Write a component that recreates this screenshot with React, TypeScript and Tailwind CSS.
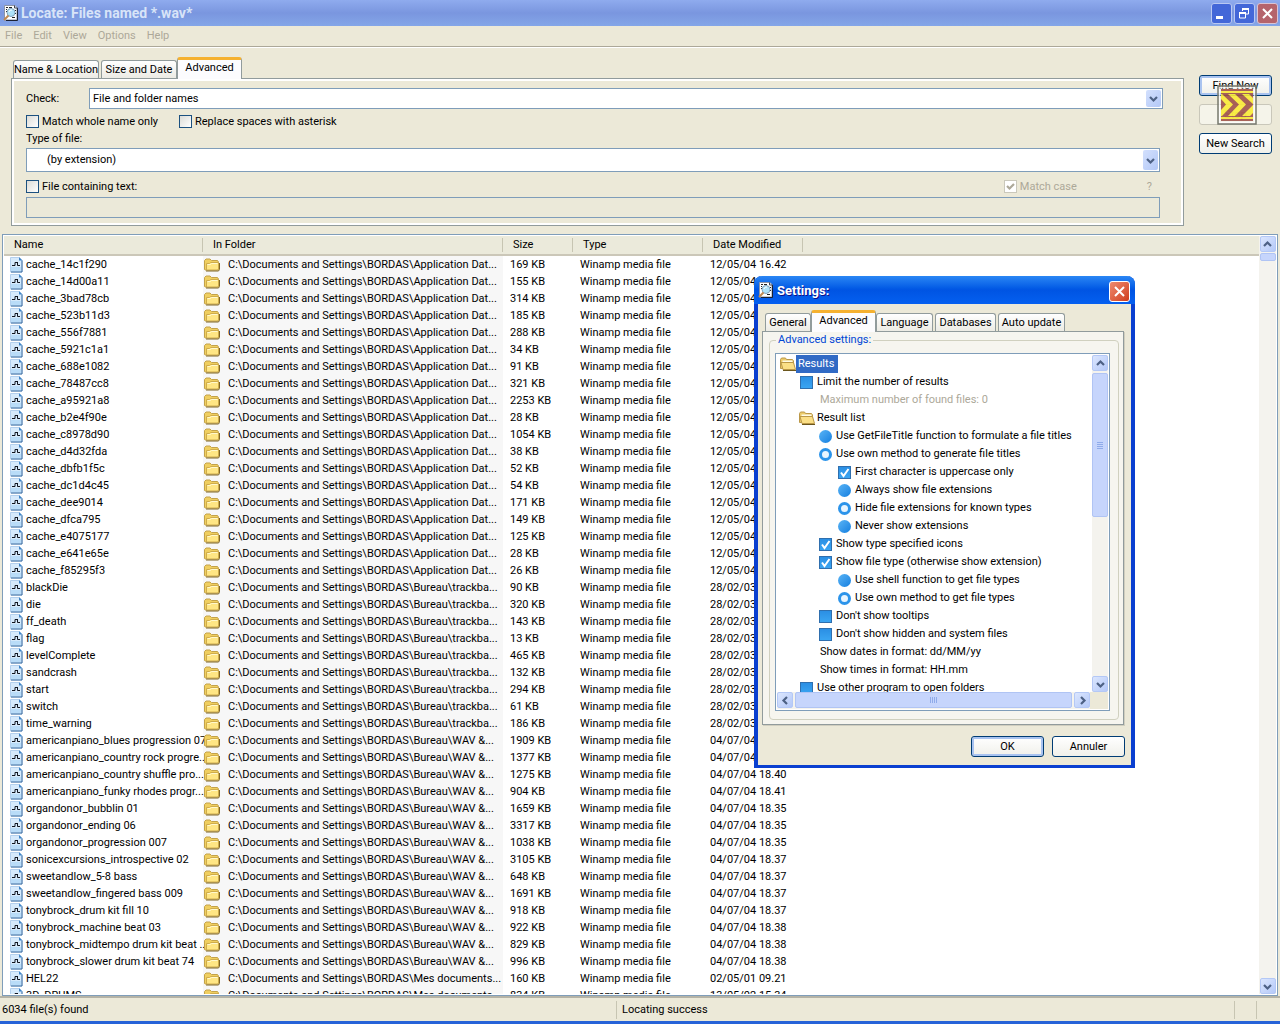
import type { ReactNode } from 'react';
import { clsx } from 'clsx';

const APP_DATA = 'C:\\Documents and Settings\\BORDAS\\Application Dat...';
const TRACKBACK = 'C:\\Documents and Settings\\BORDAS\\Bureau\\trackba...';
const WAV = 'C:\\Documents and Settings\\BORDAS\\Bureau\\WAV &...';
const MES_DOCS = 'C:\\Documents and Settings\\BORDAS\\Mes documents...';

const files = [
  ['cache_14c1f290', APP_DATA, '169 KB', '12/05/04 16.42'],
  ['cache_14d00a11', APP_DATA, '155 KB', '12/05/04 16.42'],
  ['cache_3bad78cb', APP_DATA, '314 KB', '12/05/04 16.42'],
  ['cache_523b11d3', APP_DATA, '185 KB', '12/05/04 16.42'],
  ['cache_556f7881', APP_DATA, '288 KB', '12/05/04 16.42'],
  ['cache_5921c1a1', APP_DATA, '34 KB', '12/05/04 16.42'],
  ['cache_688e1082', APP_DATA, '91 KB', '12/05/04 16.42'],
  ['cache_78487cc8', APP_DATA, '321 KB', '12/05/04 16.42'],
  ['cache_a95921a8', APP_DATA, '2253 KB', '12/05/04 16.42'],
  ['cache_b2e4f90e', APP_DATA, '28 KB', '12/05/04 16.42'],
  ['cache_c8978d90', APP_DATA, '1054 KB', '12/05/04 16.42'],
  ['cache_d4d32fda', APP_DATA, '38 KB', '12/05/04 16.42'],
  ['cache_dbfb1f5c', APP_DATA, '52 KB', '12/05/04 16.42'],
  ['cache_dc1d4c45', APP_DATA, '54 KB', '12/05/04 16.42'],
  ['cache_dee9014', APP_DATA, '171 KB', '12/05/04 16.42'],
  ['cache_dfca795', APP_DATA, '149 KB', '12/05/04 16.42'],
  ['cache_e4075177', APP_DATA, '125 KB', '12/05/04 16.42'],
  ['cache_e641e65e', APP_DATA, '28 KB', '12/05/04 16.42'],
  ['cache_f85295f3', APP_DATA, '26 KB', '12/05/04 16.42'],
  ['blackDie', TRACKBACK, '90 KB', '28/02/03 10.15'],
  ['die', TRACKBACK, '320 KB', '28/02/03 10.15'],
  ['ff_death', TRACKBACK, '143 KB', '28/02/03 10.15'],
  ['flag', TRACKBACK, '13 KB', '28/02/03 10.15'],
  ['levelComplete', TRACKBACK, '465 KB', '28/02/03 10.15'],
  ['sandcrash', TRACKBACK, '132 KB', '28/02/03 10.15'],
  ['start', TRACKBACK, '294 KB', '28/02/03 10.15'],
  ['switch', TRACKBACK, '61 KB', '28/02/03 10.15'],
  ['time_warning', TRACKBACK, '186 KB', '28/02/03 10.15'],
  ['americanpiano_blues progression 07', WAV, '1909 KB', '04/07/04 18.40'],
  ['americanpiano_country rock progre...', WAV, '1377 KB', '04/07/04 18.40'],
  ['americanpiano_country shuffle pro...', WAV, '1275 KB', '04/07/04 18.40'],
  ['americanpiano_funky rhodes progr...', WAV, '904 KB', '04/07/04 18.41'],
  ['organdonor_bubblin 01', WAV, '1659 KB', '04/07/04 18.35'],
  ['organdonor_ending 06', WAV, '3317 KB', '04/07/04 18.35'],
  ['organdonor_progression 007', WAV, '1038 KB', '04/07/04 18.35'],
  ['sonicexcursions_introspective 02', WAV, '3105 KB', '04/07/04 18.37'],
  ['sweetandlow_5-8 bass', WAV, '648 KB', '04/07/04 18.37'],
  ['sweetandlow_fingered bass 009', WAV, '1691 KB', '04/07/04 18.37'],
  ['tonybrock_drum kit fill 10', WAV, '918 KB', '04/07/04 18.37'],
  ['tonybrock_machine beat 03', WAV, '922 KB', '04/07/04 18.38'],
  ['tonybrock_midtempo drum kit beat ...', WAV, '829 KB', '04/07/04 18.38'],
  ['tonybrock_slower drum kit beat 74', WAV, '996 KB', '04/07/04 18.38'],
  ['HEL22', MES_DOCS, '160 KB', '02/05/01 09.21'],
  ['3D_DRUMS', MES_DOCS, '834 KB', '13/05/02 15.34'],
];

type TreeItem = {
  label: string;
  kind: 'folder' | 'check' | 'radio' | 'text';
  level: 0 | 1 | 2 | 3;
  on?: boolean;
  group?: string;
  disabled?: boolean;
};

const treeItems: TreeItem[] = [
  { label: 'Results', kind: 'folder', level: 0, on: true },
  { label: 'Limit the number of results', kind: 'check', level: 1 },
  { label: 'Maximum number of found files: 0', kind: 'text', level: 1, disabled: true },
  { label: 'Result list', kind: 'folder', level: 1 },
  { label: 'Use GetFileTitle function to formulate a file titles', kind: 'radio', level: 2, group: 'titles' },
  { label: 'Use own method to generate file titles', kind: 'radio', level: 2, group: 'titles', on: true },
  { label: 'First character is uppercase only', kind: 'check', level: 3, on: true },
  { label: 'Always show file extensions', kind: 'radio', level: 3, group: 'extensions' },
  { label: 'Hide file extensions for known types', kind: 'radio', level: 3, group: 'extensions', on: true },
  { label: 'Never show extensions', kind: 'radio', level: 3, group: 'extensions' },
  { label: 'Show type specified icons', kind: 'check', level: 2, on: true },
  { label: 'Show file type (otherwise show extension)', kind: 'check', level: 2, on: true },
  { label: 'Use shell function to get file types', kind: 'radio', level: 3, group: 'types' },
  { label: 'Use own method to get file types', kind: 'radio', level: 3, group: 'types', on: true },
  { label: "Don't show tooltips", kind: 'check', level: 2 },
  { label: "Don't show hidden and system files", kind: 'check', level: 2 },
  { label: 'Show dates in format: dd/MM/yy', kind: 'text', level: 1 },
  { label: 'Show times in format: HH.mm', kind: 'text', level: 1 },
  { label: 'Use other program to open folders', kind: 'check', level: 1 },
];

const treeIndent = ['pl-[3px]', 'pl-[22px]', 'pl-[41px]', 'pl-[60px]'];

function AppIcon() {
  return (
    <svg width="16" height="16" viewBox="0 0 16 16" className="shrink-0">
      <path d="M1.500 .5h10.500l2 2v12.500H1.500z" fill="#fff" stroke="#8d95a8" />
      <path d="M14.500 3v12.500H3" fill="none" stroke="#1b2233" />
      <path d="M11.500 .5V3h3" fill="none" stroke="#3b4254" />
      <path d="M3 2.500h2M6 2.500h3M3 4.500h1M3 6.500h1M12 5.500h1M12 8.500h1M9 12.500h3" stroke="#222" />
      <circle cx="8" cy="7.500" r="4" fill="#aee2f8" stroke="#7fa3bd" />
      <path d="M6 7a2.500 2.500 0 0 1 3-2" fill="none" stroke="#fff" />
      <path d="M5.500 10.500L1 15" stroke="#c08a52" strokeWidth="2" />
    </svg>
  );
}

function WaveFileIcon() {
  return (
    <svg width="13" height="16" viewBox="0 0 13 16" className="shrink-0">
      <path d="M.5 .5h8.500l3 3v11.500H.5z" fill="#d6eafc" stroke="#b4d0ee" />
      <path d="M1 10h10v4.500H1z" fill="#b9dcf8" />
      <path d="M12 3.500V15H1" fill="none" stroke="#3c6c9f" />
      <path d="M9 0l3.500 3.500H9z" fill="#3f83c6" />
      <path d="M2 8.500h3v-3M5 5.500h3M7.500 6v2.500h2.500" fill="none" stroke="#10151f" />
    </svg>
  );
}

function FolderIcon() {
  return (
    <svg width="16" height="14" viewBox="0 0 16 14" className="shrink-0">
      <path d="M.5 11.500V2.500L2 1h4l1.500 1.500h6L14.500 4v8H1z" fill="#f0cf60" stroke="#c3a24a" />
      <path d="M2.500 5.500h3l1-1h8v6.500l-1 1H2.500z" fill="#ffe684" stroke="#cfac4c" />
      <path d="M3.500 6.500h3l1-1h6" fill="none" stroke="#fff8cf" />
      <path d="M2 13h12.500l1-1.500V5" fill="none" stroke="#806829" />
    </svg>
  );
}

function OpenFolderIcon() {
  return (
    <svg width="16" height="14" viewBox="0 0 16 14" className="shrink-0">
      <path d="M.5 11.500V2.500L1.500 1h4l1 1.500h6l1 1.500v8z" fill="#eccb6a" stroke="#bb9848" />
      <path d="M2.500 3.500h10v3h-10z" fill="#fffbe6" />
      <path d="M1 5.500h12.500l2 7H3z" fill="#fbdf86" stroke="#bb9848" />
      <path d="M3 13.500h13" stroke="#6b561d" />
    </svg>
  );
}

type Direction = 'up' | 'down' | 'left' | 'right';

const chevrons = {
  up: 'M1 6l3.500-3.500L8 6',
  down: 'M1 3l3.500 3.500L8 3',
  left: 'M6 1L2.500 4.500 6 8',
  right: 'M3 1l3.500 3.500L3 8',
};

function Chevron({ direction }: { direction: Direction }) {
  return (
    <svg width="9" height="9" viewBox="0 0 9 9">
      <path d={chevrons[direction]} fill="none" stroke="#4d6185" strokeWidth="2.200" />
    </svg>
  );
}

function ScrollButton({ direction }: { direction: Direction }) {
  return (
    <button
      type="button"
      aria-label={`Scroll ${direction}`}
      className="flex h-4 w-4 shrink-0 items-center justify-center rounded-xs border border-[#b4c8f6] bg-linear-to-br from-[#dbe6fe] to-[#b5c9f8]"
    >
      <Chevron direction={direction} />
    </button>
  );
}

function Tab({ label, active, className }: { label: string; active?: boolean; className: string }) {
  return (
    <button
      type="button"
      role="tab"
      aria-selected={!!active}
      className={clsx(
        'shrink-0 whitespace-nowrap rounded-t-[3px] border border-b-0 border-[#919b9c] text-center',
        active
          ? 'z-10 -mb-px h-[22px] border-t-[3px] border-t-[#f5b130] bg-[#fcfcfe] pb-[4px]'
          : 'h-[18px] bg-linear-to-b from-white to-[#ecebe4]',
        className,
      )}
    >
      {label}
    </button>
  );
}

function PushButton({ children, primary, disabled }: { children: ReactNode; primary?: boolean; disabled?: boolean }) {
  return (
    <button
      type="button"
      disabled={disabled}
      className={clsx(
        'h-[21px] w-[73px] rounded-[3px] border text-center',
        disabled
          ? 'border-[#c9c7ba] bg-[#f5f4ea] text-[#a1a192]'
          : 'border-[#003c74] bg-linear-to-b from-white to-[#f0f0ea]',
        primary && 'shadow-[inset_0_0_0_2px_#a9c3f0]',
      )}
    >
      {children}
    </button>
  );
}

function CheckField({ label, checked, disabled }: { label: string; checked?: boolean; disabled?: boolean }) {
  return (
    <label className={clsx('flex items-center gap-[3px] leading-[13px]', disabled && 'text-[#aca899]')}>
      <span className="relative flex h-[13px] w-[13px]">
        <input
          type="checkbox"
          defaultChecked={checked}
          disabled={disabled}
          className={clsx(
            'peer h-[13px] w-[13px] appearance-none border',
            disabled ? 'border-[#cac8bb] bg-white' : 'border-[#1c5180] bg-linear-to-br from-[#dcdcd7] to-white',
          )}
        />
        <svg viewBox="0 0 13 13" className="pointer-events-none absolute inset-0 hidden peer-checked:block">
          <path d="M3 6l2.500 2.500L10 4" fill="none" stroke="#aca899" strokeWidth="2.200" />
        </svg>
      </span>
      {label}
    </label>
  );
}

function DropDown({ label, value, className }: { label: string; value: string; className: string }) {
  return (
    <div className="relative flex-1">
      <select
        aria-label={label}
        className={clsx('block w-full appearance-none border border-[#7f9db9] bg-white', className)}
      >
        <option>{value}</option>
      </select>
      <span className="pointer-events-none absolute inset-y-[2px] right-[2px] flex w-[15px] items-center justify-center rounded-xs bg-linear-to-br from-[#d3e0fd] to-[#b3c8f7]">
        <Chevron direction="down" />
      </span>
    </div>
  );
}

function TitleBar() {
  return (
    <header className="flex h-[26px] shrink-0 items-center bg-linear-to-b from-[#8fabee] via-[#7a96df] to-[#84a6e8] pl-[3px] pr-[2px]">
      <AppIcon />
      <h1 className="ml-[2px] flex-1 text-[14px] font-bold text-[#d8e4f8]">
        Locate: Files named *.wav*
      </h1>
      <div className="flex gap-[2px]">
        <button type="button" aria-label="Minimize" className="h-[21px] w-[21px] rounded-[3px] border border-[#b9c8f2] bg-[#4367d8]">
          <svg viewBox="0 0 19 19">
            <path d="M4 13.500h7" stroke="#fff" strokeWidth="3" />
          </svg>
        </button>
        <button type="button" aria-label="Restore" className="h-[21px] w-[21px] rounded-[3px] border border-[#b9c8f2] bg-[#4367d8]">
          <svg viewBox="0 0 19 19">
            <path d="M7.500 7V4.500h6v5.500H11" fill="none" stroke="#fff" />
            <path d="M7 5h7" stroke="#fff" strokeWidth="2" />
            <path d="M4.500 8.500h6v5.500h-6z" fill="none" stroke="#fff" />
            <path d="M4 9h7" stroke="#fff" strokeWidth="2" />
          </svg>
        </button>
        <button type="button" aria-label="Close" className="h-[21px] w-[21px] rounded-[3px] border border-[#d9c3d4] bg-[#b5646c]">
          <svg viewBox="0 0 19 19">
            <path d="M5 5l9 9M14 5l-9 9" stroke="#fff" strokeWidth="2" />
          </svg>
        </button>
      </div>
    </header>
  );
}

// The animation is translucent, so the buttons under it stay visible
function SearchAnimation() {
  return (
    <svg
      viewBox="0 0 40 40"
      className="pointer-events-none absolute left-[18px] top-[38px] h-10 w-10"
    >
      <rect x="1" y="1" width="38" height="38" fill="#f4f3ea" fillOpacity="0.300" stroke="#77796f" strokeWidth="1.500" />
      <rect x="2.500" y="2.500" width="35" height="35" fill="none" stroke="#fff" strokeOpacity="0.700" />
      <g opacity="0.850">
        <path d="M4 4h32v32H4z" fill="#9c4a40" />
        <path d="M4 6h32v2H4zM4 32h32v2H4z" fill="#f8e82c" />
        <path d="M4 9h1l11 10.500L5 31H4v-6l5-5.500L4 14z" fill="#fbec2c" />
        <path d="M11 9h7l11 10.500L18 31h-7l11-11.500z" fill="#fbec2c" />
        <path d="M25 9h7l4 4v6zM36 20v8l-3 3h-8z" fill="#fbec2c" />
      </g>
    </svg>
  );
}

function SearchPanel() {
  return (
    <div className="flex items-start pl-[11px] pr-2">
      <div className="flex-1 pt-[10px]">
        <div role="tablist" className="flex items-end pl-[2px]">
          <Tab label="Name & Location" className="mr-[2px] w-[86px]" />
          <Tab label="Size and Date" className="w-[76px]" />
          <Tab label="Advanced" active className="w-[65px]" />
        </div>
        <div className="border border-[#919b9c] pb-[7px] pl-[14px] pr-[20px] pt-[9px] shadow-[inset_0_0_0_2px_#fff]">
          <div className="flex items-center">
            <span className="w-[63px]">Check:</span>
            <DropDown label="Check" value="File and folder names" className="h-[21px] pl-[3px]" />
          </div>
          <div className="mt-[6px] flex">
            <div className="w-[153px]">
              <CheckField label="Match whole name only" />
            </div>
            <CheckField label="Replace spaces with asterisk" />
          </div>
          <div className="mr-[3px]">
            <div className="mt-1 leading-[14px]">Type of file:</div>
            <div className="mt-[2px] flex">
              <DropDown label="Type of file" value="(by extension)" className="h-6 pl-5" />
            </div>
            <div className="mt-2 flex items-center">
              <CheckField label="File containing text:" />
              <div className="ml-auto mr-[70px]">
                <CheckField label="Match case" checked disabled />
              </div>
              <span className="mr-2 leading-[13px] text-[#aca899]">?</span>
            </div>
            <input
              aria-label="File containing text"
              disabled
              className="mt-1 block h-[21px] w-full border border-[#7f9db9] bg-[#ebe9d9]"
            />
          </div>
        </div>
      </div>
      <div className="relative ml-[15px] flex flex-col gap-2 pt-7">
        <PushButton primary>Find Now</PushButton>
        <PushButton disabled>Stop</PushButton>
        <PushButton>New Search</PushButton>
        <SearchAnimation />
      </div>
    </div>
  );
}

function FileTable() {
  return (
    <table className="w-full table-fixed border-collapse">
      <colgroup>
        <col className="w-[199px]" />
        <col className="w-[300px]" />
        <col className="w-[70px]" />
        <col className="w-[130px]" />
        <col className="w-[100px]" />
        <col />
      </colgroup>
      <thead>
        <tr className="h-[20px] bg-[#ebeadb] shadow-[inset_0_-2px_0_#cbc7b8]">
          {['Name', 'In Folder', 'Size', 'Type', 'Date Modified'].map((title) => (
            <th key={title} className="p-0 pt-[2px] text-left align-top font-normal">
              <span className="block h-[14px] border-r border-[#c7c5b2] pl-[10px] leading-[14px]">{title}</span>
            </th>
          ))}
          <th className="p-0" />
        </tr>
      </thead>
      <tbody>
        {files.map(([name, folder, size, date]) => (
          <tr key={name} className="h-[17px] whitespace-nowrap leading-[17px]">
            <td className="p-0">
              <div className="flex items-center gap-[3px] pl-[6px]">
                <WaveFileIcon />
                {name}
              </div>
            </td>
            <td className="bg-[#f7f7f7] p-0">
              <div className="flex items-center gap-2 pl-[1px]">
                <FolderIcon />
                {folder}
              </div>
            </td>
            <td className="p-0 pl-[7px]">{size}</td>
            <td className="p-0 pl-[7px]">Winamp media file</td>
            <td className="p-0 pl-[7px]">{date}</td>
            <td />
          </tr>
        ))}
      </tbody>
    </table>
  );
}

function TreeGlyph({ item }: { item: TreeItem }) {
  if (item.kind === 'folder') return <OpenFolderIcon />;
  if (item.kind === 'text') return <span className="w-[17px]" />;

  if (item.kind === 'radio') {
    return (
      <input
        type="radio"
        name={item.group}
        defaultChecked={item.on}
        className="ml-px h-[13px] w-[13px] shrink-0 appearance-none rounded-full bg-linear-to-br from-[#58b4f5] to-[#0c7fe0] checked:border-[3px] checked:border-[#2c94ea] checked:bg-[#e8f5ff] checked:bg-none"
      />
    );
  }

  return (
    <span className="relative ml-px flex h-[13px] w-[13px] shrink-0">
      <input
        type="checkbox"
        defaultChecked={item.on}
        className="peer h-[13px] w-[13px] appearance-none border border-[#2f6fae] bg-linear-to-b from-[#2b8fe4] to-[#3aa5f2]"
      />
      <svg viewBox="0 0 13 13" className="pointer-events-none absolute inset-0 hidden peer-checked:block">
        <path d="M3 6.500L5.500 10 10.500 3" fill="none" stroke="#fff" strokeWidth="2" />
      </svg>
    </span>
  );
}

function SettingsTree() {
  return (
    <div className="border border-[#7f9db9] bg-white p-px">
      <div className="flex">
        <div className="h-[337px] flex-1 overflow-hidden">
          {treeItems.map((item) => (
            <label
              key={item.label}
              className={clsx(
                'flex h-[18px] items-center whitespace-nowrap leading-[18px]',
                treeIndent[item.level],
                item.disabled && 'text-[#aca899]',
              )}
            >
              <TreeGlyph item={item} />
              <span
                className={clsx(
                  item.kind === 'folder' ? 'px-[2px]' : 'pl-1',
                  item.kind === 'folder' && item.on && 'bg-[#316ac5] pr-1 text-white',
                )}
              >
                {item.label}
              </span>
            </label>
          ))}
        </div>
        <div className="flex w-4 flex-col bg-[#f4f3ee]">
          <ScrollButton direction="up" />
          <div className="mt-[2px] flex h-[144px] items-center justify-center rounded-xs border border-[#b0c4f4] bg-[#c6d5fc]">
            <Grip vertical />
          </div>
          <div className="flex-1" />
          <ScrollButton direction="down" />
        </div>
      </div>
      <div className="flex h-[17px] bg-[#ece9d8]">
        <div className="flex flex-1 gap-[2px] bg-[#f4f3ee]">
          <ScrollButton direction="left" />
          <div className="flex h-4 flex-1 items-center justify-center rounded-xs border border-[#b0c4f4] bg-[#c6d5fc]">
            <Grip />
          </div>
          <ScrollButton direction="right" />
        </div>
        <div className="w-[18px]" />
      </div>
    </div>
  );
}

function Grip({ vertical }: { vertical?: boolean }) {
  return (
    <svg width="8" height="8" viewBox="0 0 8 8">
      <path
        d={vertical ? 'M1 1.500h6M1 3.500h6M1 5.500h6M1 7.500h6' : 'M.5 1v6M2.500 1v6M4.500 1v6M6.500 1v6'}
        stroke="#8fabea"
      />
    </svg>
  );
}

function SettingsDialog() {
  return (
    <div
      role="dialog"
      aria-label="Settings"
      className="absolute left-[754px] top-[276px] z-20 w-[381px] rounded-t-lg border-x-4 border-b-[3px] border-[#0a3fd0] bg-[#ece9d8]"
    >
      <div className="-mx-1 flex h-[28px] items-center rounded-t-lg bg-linear-to-b from-[#2a86f4] via-[#0054e3] to-[#0560f0] pl-1 pr-[5px]">
        <AppIcon />
        <h2 className="ml-[3px] flex-1 pt-[2px] text-[13px] font-bold text-white [text-shadow:1px_1px_#0f1089]">
          Settings:
        </h2>
        <button type="button" aria-label="Close" className="mt-[2px] h-[21px] w-[21px] rounded-[3px] border border-white bg-linear-to-br from-[#ee8a6e] to-[#cf3a17]">
          <svg viewBox="0 0 19 19">
            <path d="M5 5l9 9M14 5l-9 9" stroke="#fff" strokeWidth="2" />
          </svg>
        </button>
      </div>
      <div className="pl-1 pr-[7px] pt-[6px]">
        <div role="tablist" className="flex items-end pl-[3px]">
          <Tab label="General" className="w-[46px]" />
          <Tab label="Advanced" active className="w-[65px]" />
          <Tab label="Language" className="mr-[2px] w-[57px]" />
          <Tab label="Databases" className="mr-[2px] w-[61px]" />
          <Tab label="Auto update" className="w-[67px]" />
        </div>
        <div className="border border-[#919b9c] bg-[#f6f5ef] pb-1 pl-[6px] pr-1 shadow-[1px_1px_#d0cebf]">
          <fieldset className="rounded-sm border border-[#d0d0bf] pb-2 pl-[5px] pr-2">
            <legend className="ml-[1px] px-[2px] leading-[16px] text-[#0046d5]">Advanced settings:</legend>
            <div className="pt-[5px]">
              <SettingsTree />
            </div>
          </fieldset>
        </div>
      </div>
      <div className="flex justify-end gap-2 pb-2 pr-[6px] pt-[11px]">
        <PushButton primary>OK</PushButton>
        <PushButton>Annuler</PushButton>
      </div>
    </div>
  );
}

export default function App() {
  return (
    <div className="relative flex h-screen flex-col overflow-hidden bg-[#ece9d8] font-['Roboto',Arial,sans-serif] text-[11px] leading-[14px] text-black">
      <TitleBar />
      <nav className="flex h-[21px] shrink-0 items-center gap-[11px] border-b border-[#aca899] pl-[5px] text-[#aca899] shadow-[0_1px_#fff]">
        {['File', 'Edit', 'View', 'Options', 'Help'].map((item) => (
          <button key={item} type="button">
            {item}
          </button>
        ))}
      </nav>
      <SearchPanel />
      <main className="mx-[2px] mt-2 flex min-h-0 flex-1 border border-[#7f9db9] bg-white p-px">
        <div className="min-w-0 flex-1 overflow-hidden">
          <FileTable />
        </div>
        <div className="flex w-[17px] flex-col items-center bg-[#f4f3ee]">
          <ScrollButton direction="up" />
          <div className="mt-px h-2 w-4 rounded-xs border border-[#b0c4f4] bg-[#c6d5fc]" />
          <div className="flex-1" />
          <ScrollButton direction="down" />
        </div>
      </main>
      <footer className="flex h-[25px] shrink-0 items-center border-t-2 border-[#b5b3a6] pl-[2px]">
        <div className="w-[615px] border-r border-[#c7c5b2] py-[2px]">6034 file(s) found</div>
        <div className="flex-1 border-r border-[#c7c5b2] py-[2px] pl-[5px]">Locating success</div>
        <div className="h-[18px] w-[22px] border-r border-[#c7c5b2]" />
        <div className="h-[18px] w-[23px]" />
      </footer>
      <div className="h-[3px] shrink-0 bg-[#2763d8]" />
      <SettingsDialog />
    </div>
  );
}
